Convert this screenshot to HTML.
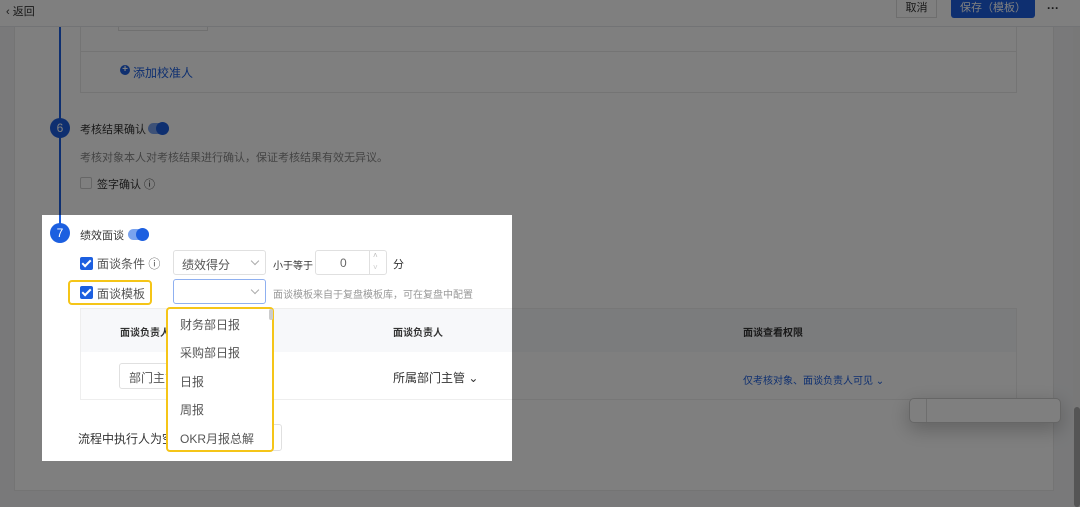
<!DOCTYPE html>
<html><head><meta charset="utf-8"><style>
*{box-sizing:border-box;margin:0;padding:0}
body{width:1080px;height:507px;overflow:hidden;background:#f2f3f5;font-family:"Liberation Sans","Noto Sans CJK SC",sans-serif;color:#333;position:relative;font-size:12px}
.a{position:absolute}
.hdr{left:0;top:0;width:1080px;height:27px;background:#fff;border-bottom:1px solid #e5e6eb}
.panel{left:14px;top:27px;width:1040px;height:464px;background:#fff;border:1px solid #e8e8e8;border-top:none}
.circ{width:20px;height:20px;border-radius:50%;background:#1c5fe0;color:#fff;font-size:12px;text-align:center;line-height:20px}
.tog{width:21px;height:11px;border-radius:6px;background:#7aa3ee}
.tog:after{content:"";position:absolute;right:0;top:-1px;width:13px;height:13px;border-radius:50%;background:#1c5fe0}
.cb{width:13px;height:13px;border-radius:2px;background:#1c5fe0}
.cb:after{content:"";position:absolute;left:4px;top:1px;width:3px;height:7px;border:solid #fff;border-width:0 2px 2px 0;transform:rotate(45deg)}
.sel{border:1px solid #e0e0e0;border-radius:3px;background:#fff}
.chev{width:6px;height:6px;border:solid #aaa;border-width:0 1px 1px 0;transform:rotate(45deg)}
.dd div{position:absolute;left:12px;font-size:12px;color:#555}
</style></head><body>
<div class="a hdr"></div>
<div class="a" style="left:6px;top:3px;font-size:11px;color:#333">‹ 返回</div>
<div class="a" style="left:896px;top:0;width:41px;height:18px;background:#fff;border:1px solid #ddd;border-top:none;font-size:11px;text-align:center;line-height:17px">取消</div>
<div class="a" style="left:951px;top:0;width:84px;height:18px;background:#1c5fe0;color:#fff;font-size:11px;text-align:center;line-height:17px;border-radius:0 0 3px 3px">保存（模板）</div>
<div class="a" style="left:1047px;top:1px;font-size:12px;font-weight:bold">···</div>
<div class="a panel"></div>
<div class="a" style="left:80px;top:27px;width:937px;height:66px;border:1px solid #e8e8e8;border-top:none"></div>
<div class="a" style="left:80px;top:51px;width:937px;height:1px;background:#e8e8e8"></div>
<div class="a" style="left:118px;top:27px;width:90px;height:4px;border:1px solid #e0e0e0;border-top:none"></div>
<div class="a" style="left:120px;top:65px;width:10px;height:10px;border-radius:50%;background:#1c5fe0;color:#fff;font-size:10px;line-height:10px;text-align:center;font-weight:bold">+</div>
<div class="a" style="left:133px;top:64px;font-size:12px;color:#1c5fe0">添加校准人</div>
<div class="a" style="left:59px;top:27px;width:2px;height:198px;background:#1c5fe0"></div>
<div class="a circ" style="left:50px;top:118px">6</div>
<div class="a" style="left:80px;top:121px;font-size:11px">考核结果确认</div>
<div class="a tog" style="left:148px;top:123px"></div>
<div class="a" style="left:80px;top:149px;font-size:11px;color:#888">考核对象本人对考核结果进行确认，保证考核结果有效无异议。</div>
<div class="a" style="left:80px;top:177px;width:12px;height:12px;border:1px solid #ccc;border-radius:2px;background:#fff"></div>
<div class="a" style="left:97px;top:176px;font-size:11px">签字确认 ⓘ</div>
<div class="a circ" style="left:50px;top:223px">7</div>
<div class="a" style="left:80px;top:227px;font-size:11px">绩效面谈</div>
<div class="a tog" style="left:128px;top:229px"></div>
<div class="a cb" style="left:80px;top:257px"></div>
<div class="a" style="left:97px;top:255px;font-size:12px;color:#555">面谈条件 ⓘ</div>
<div class="a sel" style="left:173px;top:250px;width:93px;height:25px"><span class="a" style="left:8px;top:5px;color:#555">绩效得分</span><span class="a chev" style="left:78px;top:7px"></span></div>
<div class="a" style="left:273px;top:257px;font-size:10px">小于等于</div>
<div class="a sel" style="left:315px;top:250px;width:72px;height:25px"><span class="a" style="left:24px;top:5px;color:#666">0</span><span class="a" style="left:53px;top:0;width:1px;height:23px;background:#e0e0e0"></span><span class="a" style="left:57px;top:0;color:#bbb;font-size:8px">˄</span><span class="a" style="left:57px;top:12px;color:#ccc;font-size:8px">˅</span></div>
<div class="a" style="left:393px;top:256px;font-size:11px">分</div>
<div class="a" style="left:68px;top:280px;width:84px;height:25px;border:2px solid #f5c518;border-radius:4px"></div>
<div class="a cb" style="left:80px;top:286px"></div>
<div class="a" style="left:97px;top:285px;font-size:12px;color:#555">面谈模板</div>
<div class="a sel" style="left:173px;top:279px;width:93px;height:25px;border-color:#8fb0f0"><span class="a chev" style="left:78px;top:7px"></span></div>
<div class="a" style="left:273px;top:286px;font-size:10px;color:#999">面谈模板来自于复盘模板库，可在复盘中配置</div>
<div class="a" style="left:80px;top:308px;width:937px;height:92px;border:1px solid #eee"></div>
<div class="a" style="left:81px;top:309px;width:935px;height:43px;background:#f7f8fa"></div>
<div class="a" style="left:120px;top:324px;font-size:10px;font-weight:bold">面谈负责人角色</div>
<div class="a" style="left:393px;top:324px;font-size:10px;font-weight:bold">面谈负责人</div>
<div class="a" style="left:743px;top:324px;font-size:10px;font-weight:bold">面谈查看权限</div>
<div class="a sel" style="left:119px;top:363px;width:120px;height:26px"><span class="a" style="left:9px;top:5px;color:#555;font-size:12px">部门主管</span></div>
<div class="a" style="left:393px;top:369px;font-size:12px">所属部门主管 ⌄</div>
<div class="a" style="left:743px;top:372px;font-size:10px;color:#1c5fe0">仅考核对象、面谈负责人可见 ⌄</div>
<div class="a" style="left:78px;top:430px;font-size:12px">流程中执行人为空时</div>
<div class="a sel" style="left:230px;top:424px;width:52px;height:27px"></div>
<div class="a dd" style="left:166px;top:307px;width:108px;height:145px;background:#fff;border:2px solid #f5c518;border-radius:4px">
<span class="a" style="left:101px;top:0;width:4px;height:11px;background:#ccc;border-radius:2px"></span>
<div style="top:7px">财务部日报</div><div style="top:35px">采购部日报</div><div style="top:64px">日报</div><div style="top:92px">周报</div><div style="top:121px">OKR月报总解</div>
</div>
<div class="a" style="left:909px;top:398px;width:152px;height:25px;background:#fff;border:1px solid #ccc;border-radius:5px;box-shadow:0 6px 20px rgba(0,0,0,.25)"><span class="a" style="left:16px;top:0;width:1px;height:23px;background:#ddd"></span></div>
<div class="a" style="left:1073px;top:27px;width:7px;height:480px;background:#f0f0f0"></div>
<div class="a" style="left:1074px;top:407px;width:6px;height:100px;background:#aaa;border-radius:3px"></div>
<div class="a" style="left:42px;top:215px;width:470px;height:246px;box-shadow:0 0 0 2000px rgba(0,0,0,.5)"></div>
</body></html>
